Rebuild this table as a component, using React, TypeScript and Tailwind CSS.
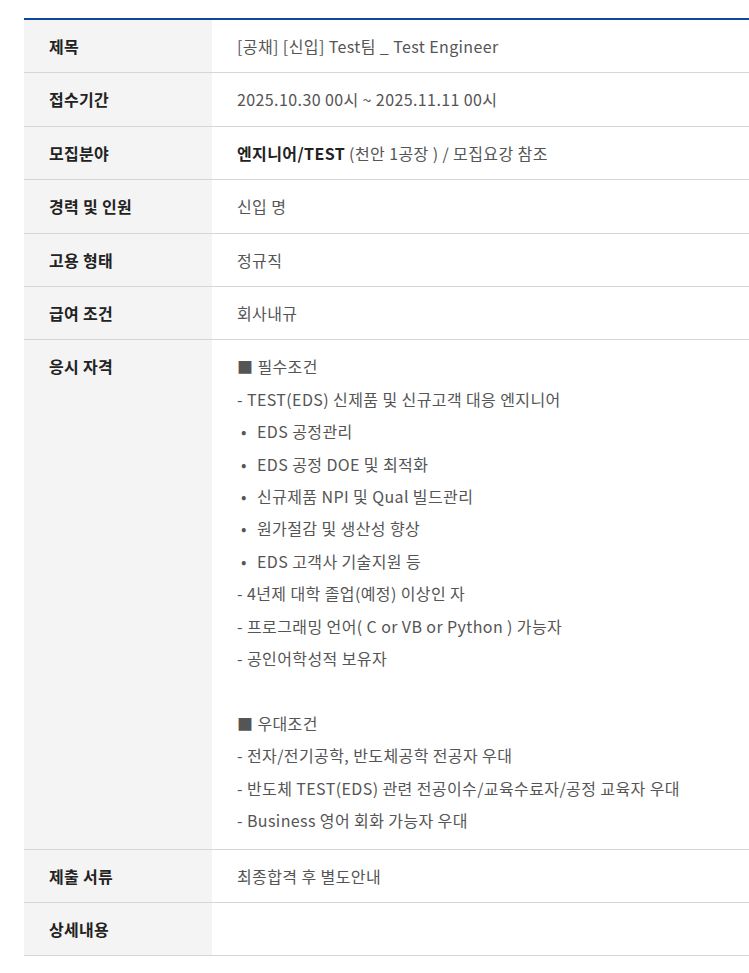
import React from "react";

const font = { fontFamily: '"Noto Sans CJK KR", "Noto Sans", sans-serif' };

function Row({ label, children, tall }: { label: string; children?: React.ReactNode; tall?: boolean }) {
  return (
    <div className="flex border-b border-[#d6d6d6]">
      <div className="w-[188px] shrink-0 bg-[#f4f4f4] pl-[25px] py-[10px] leading-[32.4px] text-[16px] tracking-[0.3px] font-bold text-[#222]">
        {label}
      </div>
      <div className={"flex-1 pl-[25px] py-[10px] leading-[32.4px] text-[16px] tracking-[0.4px] text-[#555]" + (tall ? " pb-[12px]" : "")}>
        {children}
      </div>
    </div>
  );
}

export default function App() {
  const bullet = (t: string) => (
    <div className="flex">
      <span className="w-[20px] pl-[4px]">•</span>
      <span>{t}</span>
    </div>
  );
  return (
    <div className="bg-white w-[749px] h-[973px] pt-[18px] pl-[24px]" style={font}>
      <div className="border-t-[2px] border-[#0c4a98]">
        <Row label="제목">[공채] [신입] Test팀 _ Test Engineer</Row>
        <Row label="접수기간">2025.10.30 00시 ~ 2025.11.11 00시</Row>
        <Row label="모집분야">
          <span className="font-bold text-[#222]">엔지니어/TEST</span> (천안 1공장 ) / 모집요강 참조
        </Row>
        <Row label="경력 및 인원">신입 명</Row>
        <Row label="고용 형태">정규직</Row>
        <Row label="급여 조건">회사내규</Row>
        <Row label="응시 자격" tall>
          <div>■ 필수조건</div>
          <div>- TEST(EDS) 신제품 및 신규고객 대응 엔지니어</div>
          {bullet("EDS 공정관리")}
          {bullet("EDS 공정 DOE 및 최적화")}
          {bullet("신규제품 NPI 및 Qual 빌드관리")}
          {bullet("원가절감 및 생산성 향상")}
          {bullet("EDS 고객사 기술지원 등")}
          <div>- 4년제 대학 졸업(예정) 이상인 자</div>
          <div>- 프로그래밍 언어( C or VB or Python ) 가능자</div>
          <div>- 공인어학성적 보유자</div>
          <div>&nbsp;</div>
          <div>■ 우대조건</div>
          <div>- 전자/전기공학, 반도체공학 전공자 우대</div>
          <div>- 반도체 TEST(EDS) 관련 전공이수/교육수료자/공정 교육자 우대</div>
          <div>- Business 영어 회화 가능자 우대</div>
        </Row>
        <Row label="제출 서류">최종합격 후 별도안내</Row>
        <Row label="상세내용"></Row>
      </div>
    </div>
  );
}
